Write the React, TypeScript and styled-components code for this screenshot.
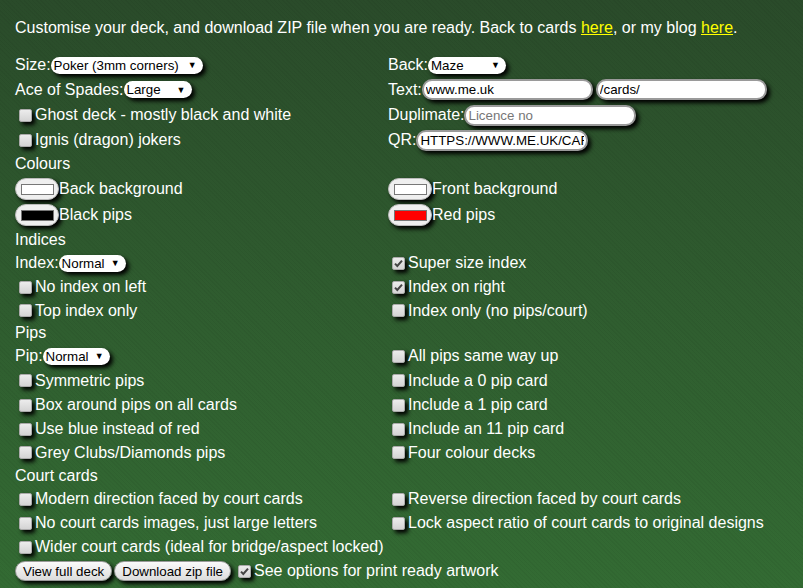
import React from "react";
import styled, { createGlobalStyle } from "styled-components";

const GlobalStyle = createGlobalStyle`
  html, body {
    margin: 0;
    min-height: 100%;
  }
  body {
    min-height: 100vh;
    background-color: #2e5a2e;
    background-image:
      repeating-linear-gradient(45deg, rgba(0, 0, 0, 0.04) 0 1px, transparent 1px 3px),
      linear-gradient(to bottom, #2a4b2a 0%, #2f5c2f 50%, #336b33 100%);
    font-family: "Liberation Sans", Arial, sans-serif;
    color: #fff;
  }
`;

const Page = styled.div`
  padding: 19px 15px 0;
`;

const Intro = styled.p`
  margin: 0;
  font-size: 16px;
  line-height: 18px;
`;

const Link = styled.a`
  color: #ffff00;
  text-decoration: underline;
`;

const Form = styled.div`
  margin-top: 16px;
`;

const Row = styled.div<{ h?: number }>`
  display: grid;
  grid-template-columns: 373px 1fr;
  height: ${({ h }) => h ?? 24}px;
`;

const Cell = styled.div`
  display: flex;
  align-items: center;
  font-size: 16px;
  white-space: nowrap;
`;

const Label = styled.span`
  line-height: 18px;
`;

const Select = styled.span<{ w: number }>`
  display: inline-flex;
  align-items: center;
  justify-content: space-between;
  box-sizing: border-box;
  width: ${({ w }) => w}px;
  height: 17px;
  padding: 0 6px 0 3px;
  background: #fff;
  border-radius: 9px;
  box-shadow: 3px 3px 4px #000;
  color: #000;
  font-size: 13.33px;
`;

const Arrow = styled.span`
  font-size: 9px;
`;

const TextInput = styled.input<{ w: number }>`
  box-sizing: border-box;
  width: ${({ w }) => w}px;
  height: 21px;
  margin: 0;
  padding: 0 2px;
  border: 2px solid #9a9a9a;
  border-radius: 10px;
  background: #fff;
  box-shadow: 3px 3px 4px #000;
  font-family: inherit;
  font-size: 13.33px;
  color: #000;
  outline: none;
  &::placeholder {
    color: #777;
  }
`;

const Swatch = styled.span`
  display: inline-flex;
  align-items: center;
  justify-content: center;
  box-sizing: border-box;
  width: 44px;
  height: 22px;
  border: 1px solid #bbb;
  border-radius: 11px;
  background: #efefef;
  box-shadow: 3px 3px 4px #000;
`;

const Chip = styled.span<{ color: string }>`
  box-sizing: border-box;
  width: 33px;
  height: 11px;
  border: 1px solid #777;
  background: ${({ color }) => color};
`;

const Box = styled.span<{ gap?: number }>`
  display: inline-block;
  box-sizing: border-box;
  width: 13px;
  height: 13px;
  margin: 0 3px 0 ${({ gap }) => gap ?? 4}px;
  border: 1px solid #aaa;
  border-radius: 2px;
  background: linear-gradient(#ececec, #d4d4d4);
  box-shadow: 3px 3px 4px #000;
  flex: none;
`;

const Tick = styled.svg`
  display: block;
  width: 11px;
  height: 11px;
`;

const Buttons = styled.div`
  display: flex;
  gap: 2px;
`;

const Button = styled.button`
  height: 20px;
  margin: 0;
  padding: 0 7px;
  border: 1px solid #9a9a9a;
  border-radius: 10px;
  background: linear-gradient(#fafafa, #dcdcdc);
  box-shadow: 3px 3px 4px #000;
  font-family: inherit;
  font-size: 13.33px;
  color: #000;
`;

const Check = ({ on, gap }: { on?: boolean; gap?: number }) => (
  <Box gap={gap}>
    {on && (
      <Tick viewBox="0 0 11 11">
        <path d="M2 5.6 L4.3 8 L9 2.6" fill="none" stroke="#444" strokeWidth="2" />
      </Tick>
    )}
  </Box>
);

const Option = ({ text, on }: { text: string; on?: boolean }) => (
  <Cell>
    <Check on={on} />
    <Label>{text}</Label>
  </Cell>
);

const Colour = ({ text, color }: { text: string; color: string }) => (
  <Cell>
    <Swatch>
      <Chip color={color} />
    </Swatch>
    <Label>{text}</Label>
  </Cell>
);

const Drop = ({ value, w }: { value: string; w: number }) => (
  <Select w={w}>
    <span>{value}</span>
    <Arrow>▼</Arrow>
  </Select>
);

const Heading = ({ text }: { text: string }) => (
  <>
    <Cell>
      <Label>{text}</Label>
    </Cell>
    <Cell />
  </>
);

const App = () => {
  return (
    <>
      <GlobalStyle />
      <Page>
        <Intro>
          Customise your deck, and download ZIP file when you are ready. Back to cards{" "}
          <Link href="#">here</Link>, or my blog <Link href="#">here</Link>.
        </Intro>
        <Form>
          <Row>
            <Cell>
              <Label>Size:</Label>
              <Drop value="Poker (3mm corners)" w={152} />
            </Cell>
            <Cell>
              <Label>Back:</Label>
              <Drop value="Maze" w={78} />
            </Cell>
          </Row>
          <Row h={25}>
            <Cell>
              <Label>Ace of Spades:</Label>
              <Drop value="Large" w={68} />
            </Cell>
            <Cell>
              <Label>Text:</Label>
              <TextInput w={171} defaultValue="www.me.uk" />
              <TextInput w={171} defaultValue="/cards/" style={{ marginLeft: 3 }} />
            </Cell>
          </Row>
          <Row h={26}>
            <Option text="Ghost deck - mostly black and white" />
            <Cell>
              <Label>Duplimate:</Label>
              <TextInput w={172} placeholder="Licence no" />
            </Cell>
          </Row>
          <Row>
            <Option text="Ignis (dragon) jokers" />
            <Cell>
              <Label>QR:</Label>
              <TextInput w={172} defaultValue="HTTPS://WWW.ME.UK/CARDS/" />
            </Cell>
          </Row>
          <Row>
            <Heading text="Colours" />
          </Row>
          <Row h={26}>
            <Colour text="Back background" color="#fff" />
            <Colour text="Front background" color="#fff" />
          </Row>
          <Row h={26}>
            <Colour text="Black pips" color="#000" />
            <Colour text="Red pips" color="#ff0000" />
          </Row>
          <Row h={23}>
            <Heading text="Indices" />
          </Row>
          <Row>
            <Cell>
              <Label>Index:</Label>
              <Drop value="Normal" w={67} />
            </Cell>
            <Option text="Super size index" on />
          </Row>
          <Row>
            <Option text="No index on left" />
            <Option text="Index on right" on />
          </Row>
          <Row h={23}>
            <Option text="Top index only" />
            <Option text="Index only (no pips/court)" />
          </Row>
          <Row h={22}>
            <Heading text="Pips" />
          </Row>
          <Row>
            <Cell>
              <Label>Pip:</Label>
              <Drop value="Normal" w={67} />
            </Cell>
            <Option text="All pips same way up" />
          </Row>
          <Row h={25}>
            <Option text="Symmetric pips" />
            <Option text="Include a 0 pip card" />
          </Row>
          <Row>
            <Option text="Box around pips on all cards" />
            <Option text="Include a 1 pip card" />
          </Row>
          <Row>
            <Option text="Use blue instead of red" />
            <Option text="Include an 11 pip card" />
          </Row>
          <Row h={23}>
            <Option text="Grey Clubs/Diamonds pips" />
            <Option text="Four colour decks" />
          </Row>
          <Row h={23}>
            <Heading text="Court cards" />
          </Row>
          <Row>
            <Option text="Modern direction faced by court cards" />
            <Option text="Reverse direction faced by court cards" />
          </Row>
          <Row>
            <Option text="No court cards images, just large letters" />
            <Option text="Lock aspect ratio of court cards to original designs" />
          </Row>
          <Row>
            <Option text="Wider court cards (ideal for bridge/aspect locked)" />
            <Cell />
          </Row>
          <Row>
            <Cell>
              <Buttons>
                <Button>View full deck</Button>
                <Button>Download zip file</Button>
              </Buttons>
              <Check on gap={7} />
              <Label>See options for print ready artwork</Label>
            </Cell>
            <Cell />
          </Row>
        </Form>
      </Page>
    </>
  );
};

export default App;
